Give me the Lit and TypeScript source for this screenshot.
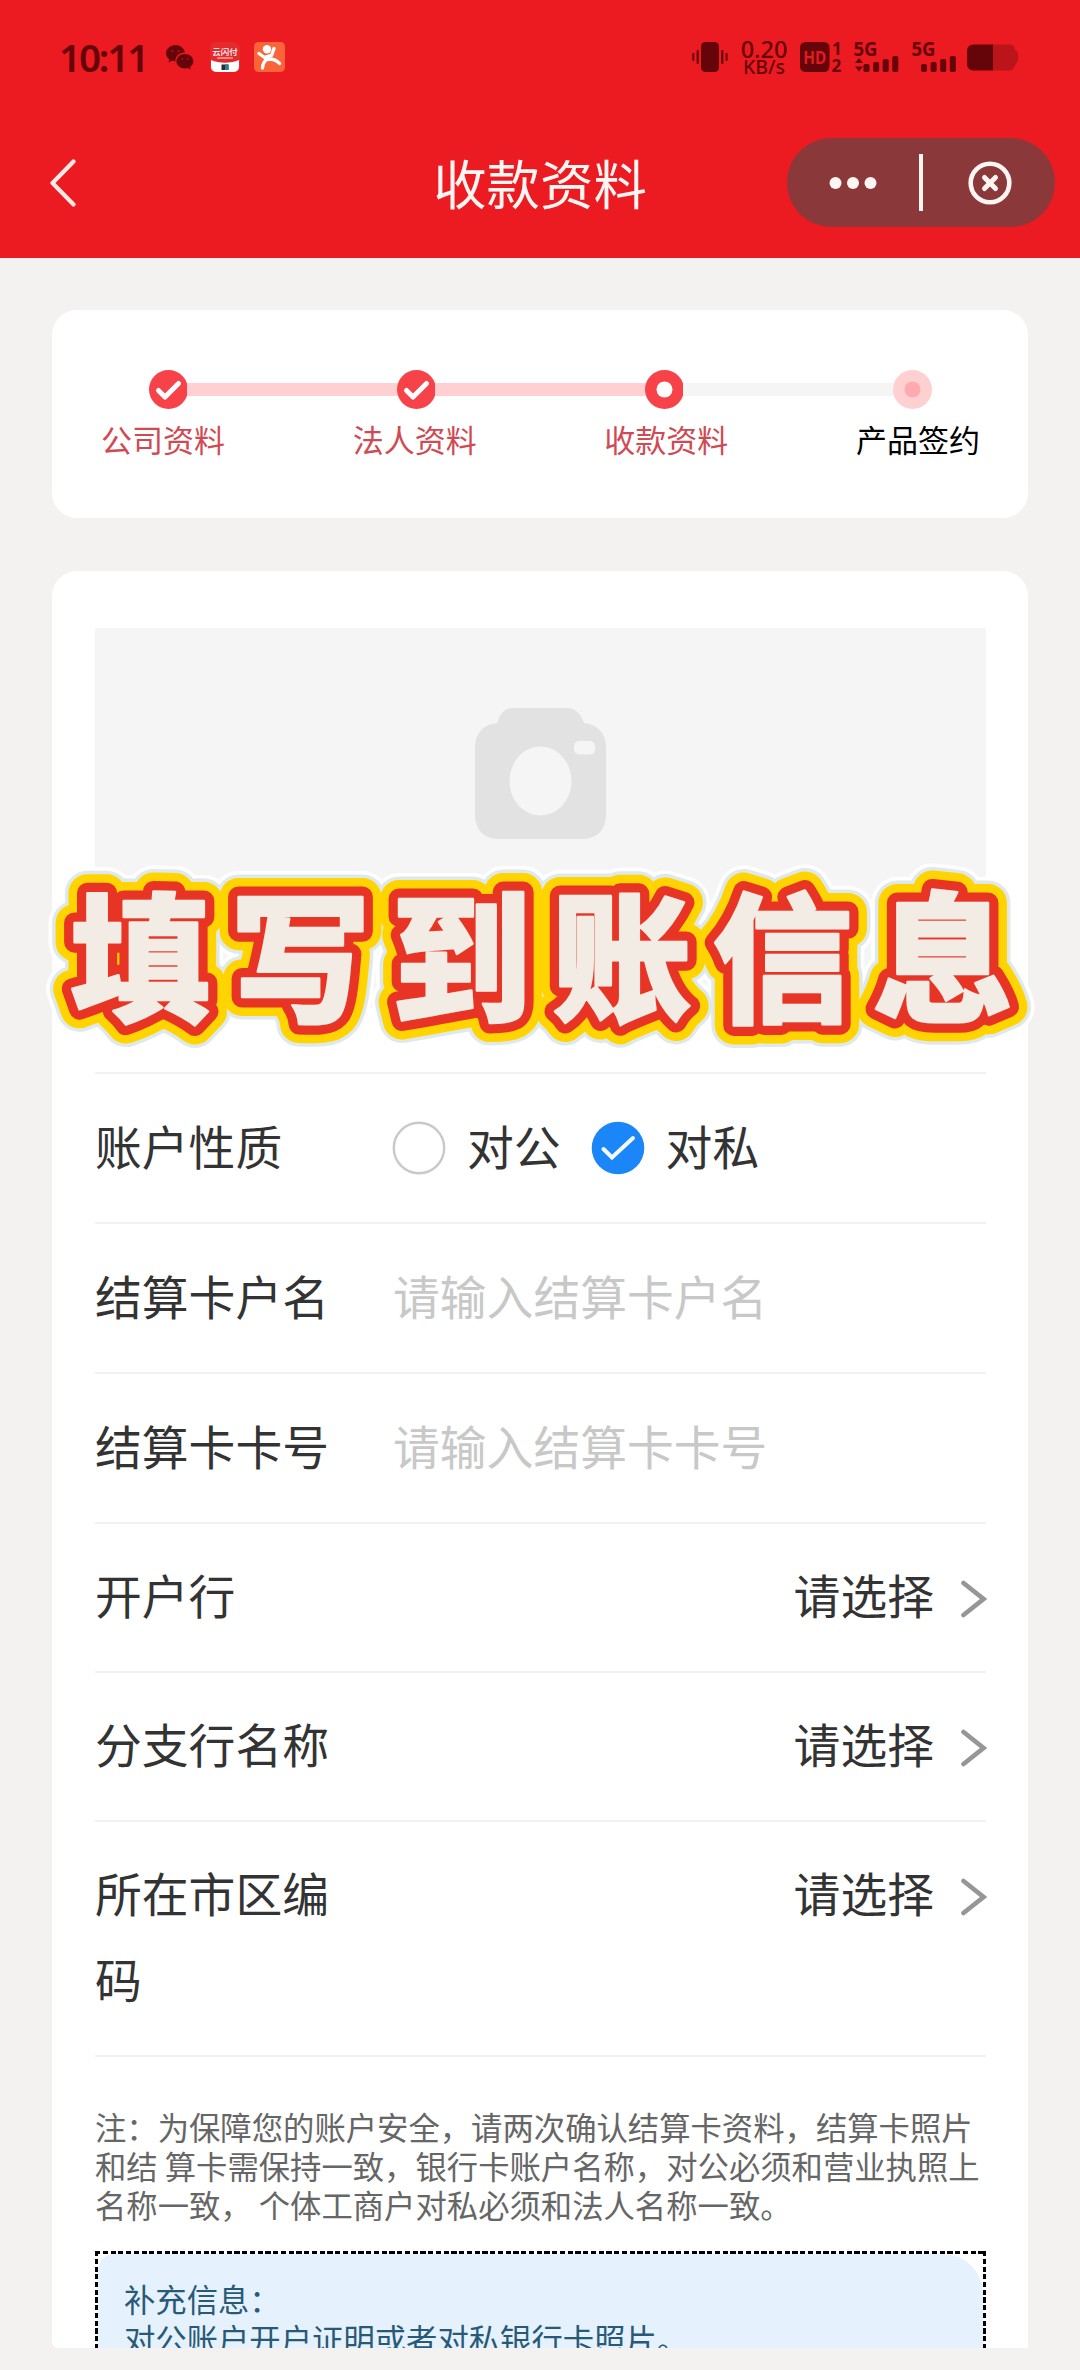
import { LitElement, html, css, svg } from "lit";
import { customElement, property } from "lit/decorators.js";

type StepState = "done" | "current" | "todo";

const STEPS: { label: string; state: StepState }[] = [
  { label: "公司资料", state: "done" },
  { label: "法人资料", state: "done" },
  { label: "收款资料", state: "current" },
  { label: "产品签约", state: "todo" },
];

const signalBars = (x: number) => svg`
  <rect x=${x} y="23" width="6" height="8" rx="1.8"/>
  <rect x=${x + 9.6} y="21" width="6" height="10" rx="1.8"/>
  <rect x=${x + 19.2} y="18" width="6" height="13" rx="1.8"/>
  <rect x=${x + 28.8} y="15" width="6" height="16" rx="1.8"/>`;

@customElement("status-bar")
export class StatusBar extends LitElement {
  static styles = css`
    :host {
      display: flex;
      align-items: center;
      height: 114px;
      padding: 0 61px 0 59px;
      color: #650509;
      font-family: "Noto Sans", "Noto Sans CJK SC", sans-serif;
    }
    svg { display: block; flex: none; overflow: visible; }
    .time {
      width: 107px;
      font-size: 38.5px;
      font-weight: 600;
      line-height: 54px;
      letter-spacing: -2.1px;
      white-space: nowrap;
    }
    .chat { margin-right: 16px; }
    .pay { margin-right: 14px; }
    .right { display: flex; align-items: center; margin-left: auto; }
    .speed {
      display: flex;
      flex-direction: column;
      align-items: center;
      width: 50px;
      margin: 2px 11px 0 11px;
      font-weight: 500;
    }
    .rate { font-size: 23.5px; line-height: 18px; }
    .unit { font-size: 19.5px; line-height: 18px; }
    .hd { margin-right: 11px; }
    .sim1 { margin-right: 13px; }
    .sim2 { margin-right: 10px; }
    .glyph { font-family: "Noto Sans", sans-serif; font-weight: 700; }
    .brand { font-family: "Noto Sans CJK SC", sans-serif; font-weight: 500; }
  `;
  render() {
    return html`
      <div class="time">10:11</div>
      <svg class="chat" width="28" height="26" viewBox="0 0 28 26">
        <path fill="#650509" d="M9.5 1C4.2 1 0 4.7 0 9.300c0 2.600 1.300 4.800 3.400 6.300L2.600 18.500l3.300-1.700c1.100.3 2.300.5 3.600.5A9 7.800 0 0 1 18.900 8.500C18.100 4.200 14.200 1 9.500 1z"/>
        <path fill="#650509" d="M19 10c-4.800 0-8.600 3.200-8.600 7.200s3.800 7.200 8.600 7.200c1 0 2-.2 2.900-.4l2.800 1.500-.7-2.500c2-1.300 3.400-3.400 3.400-5.800 0-4-3.700-7.200-8.400-7.200z"/>
        <g fill="#ec1b21" opacity=".45"><circle cx="6.300" cy="7" r="1.200"/><circle cx="12.600" cy="7" r="1.200"/><circle cx="16.200" cy="15" r="1"/><circle cx="21.700" cy="15" r="1"/></g>
      </svg>
      <svg class="pay" width="30" height="30" viewBox="0 0 30 30">
        <rect width="30" height="30" rx="6" fill="#e42a2d"/>
        <path d="M1 18c8 3.500 20 3.500 28 0v7a5 5 0 0 1-5 5H6a5 5 0 0 1-5-5z" fill="#fff"/>
        <rect x="11.500" y="22.500" width="7" height="5.500" fill="#23303a"/>
        <rect x="15" y="22.500" width="3.500" height="5.500" fill="#2f7f86"/>
        <text class="brand" x="15" y="12.500" font-size="8.500" fill="#fff" text-anchor="middle">云闪付</text>
        <rect x="7" y="15.200" width="16" height="1.600" fill="#fff" opacity=".55"/>
      </svg>
      <svg width="31" height="30" viewBox="0 0 31 30">
        <rect width="31" height="30" rx="4.500" fill="#fb6339"/>
        <g fill="none" stroke="#fff" stroke-width="3.400" stroke-linecap="round" stroke-linejoin="round">
          <path d="M5 11.500 10.500 15.500 17.500 13.500 20 6.500"/>
          <path d="M14 15.500C10.500 19 8.500 22 8.500 26"/>
          <path d="M14 17.500C18.500 16.500 22.500 18 25.500 21.500"/>
        </g>
        <circle cx="13" cy="7.200" r="4.200" fill="#fff"/>
      </svg>
      <div class="right">
        <svg width="36" height="30" viewBox="0 0 36 30" fill="#650509">
          <rect x="9" y="0" width="18" height="30" rx="4.500"/>
          <rect x="4.600" y="8" width="2.200" height="14" rx="1"/><rect x="29.200" y="8" width="2.200" height="14" rx="1"/>
          <rect x="0.300" y="11" width="2" height="8" rx="1"/><rect x="33.600" y="11" width="2" height="8" rx="1"/>
        </svg>
        <div class="speed"><span class="rate">0.20</span><span class="unit">KB/s</span></div>
        <svg class="hd" width="43" height="32" viewBox="0 0 43 32" fill="#650509">
          <rect x="0" y="1" width="29.500" height="30" rx="5.500"/>
          <text class="glyph" x="14.700" y="22.500" font-size="18" text-anchor="middle" fill="#e21c22" textLength="23" lengthAdjust="spacingAndGlyphs">HD</text>
          <text class="glyph" x="32" y="13.500" font-size="17">1</text>
          <text class="glyph" x="31.500" y="31" font-size="17">2</text>
        </svg>
        <svg class="sim1" width="45" height="32" viewBox="0 0 45 32" fill="#650509">
          <text class="glyph" x="-0.500" y="14.500" font-size="19.500" textLength="24" lengthAdjust="spacingAndGlyphs">5G</text>
          <path d="M5 17l4 5H1zM1 25.500h8l-4 5z"/>
          ${signalBars(9.5)}
        </svg>
        <svg class="sim2" width="45" height="32" viewBox="0 0 45 32" fill="#650509">
          <text class="glyph" x="-0.500" y="14.500" font-size="19.500" textLength="24" lengthAdjust="spacingAndGlyphs">5G</text>
          ${signalBars(9)}
        </svg>
        <svg width="52" height="28" viewBox="0 0 52 28">
          <path d="M25 1.500h17a6 6 0 0 1 6 5q3.500 2.500 3.500 7.500t-3.500 8a6 6 0 0 1-6 5.500H25z" fill="#bb151b"/>
          <path d="M6 1.500h20v26H6a6 6 0 0 1-6-6v-14a6 6 0 0 1 6-6z" fill="#650509"/>
        </svg>
      </div>`;
  }
}

@customElement("nav-bar")
export class NavBar extends LitElement {
  static styles = css`
    :host {
      display: grid;
      grid-template-columns: 1fr 214px 1fr;
      align-items: center;
      height: 143.5px;
      color: #fff5f3;
    }
    svg { display: block; }
    .back { margin: -6px 0 0 49px; }
    .title {
      padding-bottom: 7px;
      font-size: 53.4px;
      line-height: 60px;
      white-space: nowrap;
      text-align: center;
    }
    .capsule {
      justify-self: end;
      display: flex;
      align-items: center;
      box-sizing: border-box;
      width: 268px;
      height: 89px;
      margin: -6px 25px 0 0;
      padding-left: 42px;
      border-radius: 45px;
      background: #8b383b;
    }
    .divider { width: 4px; height: 57px; margin: 0 45px 0 42px; background: #fff5f3; }
  `;
  render() {
    return html`
      <svg class="back" width="28" height="48" viewBox="0 0 28 48">
        <path d="M24.500 2.500 3.500 24l21 21.500" fill="none" stroke="#ffe9e6" stroke-width="4.200" stroke-linecap="round" stroke-linejoin="round"/>
      </svg>
      <div class="title">收款资料</div>
      <div class="capsule">
        <svg width="48" height="14" viewBox="0 0 48 14" fill="#fff5f3">
          <circle cx="6.500" cy="7" r="6"/><circle cx="24" cy="7" r="6"/><circle cx="41.500" cy="7" r="6"/>
        </svg>
        <div class="divider"></div>
        <svg width="44" height="44" viewBox="0 0 44 44" fill="none" stroke="#fff5f3" stroke-linecap="round">
          <circle cx="22" cy="22" r="19.300" stroke-width="4.600"/>
          <path d="M16.500 16.500l11 11M27.500 16.500l-11 11" stroke-width="5"/>
        </svg>
      </div>`;
  }
}

@customElement("step-progress")
export class StepProgress extends LitElement {
  static styles = css`
    :host {
      display: block;
      box-sizing: border-box;
      height: 208px;
      padding: 59.5px 48px 0 49px;
      border-radius: 25px;
      background: #fff;
    }
    svg { display: block; flex: none; }
    .track { display: flex; align-items: center; padding: 0 48px; }
    .bar { flex: 1; height: 13px; margin: 0 -1px; background: #fed0d2; }
    .bar.pending { background: #f5f5f5; }
    .labels { display: flex; justify-content: space-between; margin-top: 9.5px; }
    .label {
      color: #d04a53;
      font-size: 31px;
      line-height: 42px;
      white-space: nowrap;
    }
    .label.todo { color: #000; }
  `;
  private dot(state: StepState) {
    const inner =
      state === "done"
        ? svg`<circle cx="19.500" cy="19.500" r="19.500" fill="#f8424a"/><path d="M9.500 20.500 16 27 29.500 13.500" fill="none" stroke="#fff" stroke-width="5" stroke-linecap="round" stroke-linejoin="round"/>`
        : state === "current"
          ? svg`<circle cx="19.500" cy="19.500" r="19.500" fill="#f8424a"/><circle cx="19.500" cy="19.500" r="8" fill="#fff"/>`
          : svg`<circle cx="19.500" cy="19.500" r="19.500" fill="#fed0d2"/><circle cx="19.500" cy="19.500" r="8" fill="#ffaab0"/>`;
    return html`<svg width="39" height="39" viewBox="0 0 39 39">${inner}</svg>`;
  }
  render() {
    return html`
      <div class="track">
        ${STEPS.map((s, i) => html`
          ${i ? html`<div class="bar ${s.state === "todo" ? "pending" : ""}"></div>` : null}
          ${this.dot(s.state)}`)}
      </div>
      <div class="labels">
        ${STEPS.map((s) => html`<div class="label ${s.state}">${s.label}</div>`)}
      </div>`;
  }
}

@customElement("form-row")
export class FormRow extends LitElement {
  @property() label = "";
  @property({ reflect: true }) kind = "input";
  @property() hint = "";
  static styles = css`
    :host {
      display: flex;
      box-sizing: border-box;
      padding: 28px 0 34px;
      border-bottom: 2px solid #f1f1f1;
      color: #333;
      font-size: 46.8px;
      line-height: 86px;
    }
    :host([kind="select"]) { padding: 27.5px 0 33.5px; }
    svg { display: block; flex: none; }
    .label { width: 250px; margin-right: 48px; }
    .hint { color: #c8c8c8; white-space: nowrap; }
    .options { display: flex; align-items: center; height: 86px; }
    .options svg { margin: 6px 0 0 -1px; }
    .text { margin: 0 31px 0 21px; white-space: nowrap; }
    .pick { display: flex; align-items: center; height: 86px; margin-left: auto; }
    .arrow { margin: 9px -1px 0 24px; }
  `;
  private field() {
    if (this.kind === "radio") {
      return html`<div class="options">
        <svg width="54" height="54" viewBox="0 0 54 54"><circle cx="27" cy="27" r="25.200" fill="#fff" stroke="#c8c9cc" stroke-width="2.400"/></svg>
        <span class="text">对公</span>
        <svg width="54" height="54" viewBox="0 0 54 54">
          <circle cx="27" cy="27" r="26.300" fill="#1b86f8"/>
          <path d="M12.500 28 21 36.500 42 17" fill="none" stroke="#f2fbff" stroke-width="4" stroke-linecap="round" stroke-linejoin="miter"/>
        </svg>
        <span class="text">对私</span>
      </div>`;
    }
    if (this.kind === "select") {
      return html`<div class="pick"><span>${this.hint}</span>
        <svg class="arrow" width="29" height="40" viewBox="0 0 29 40"><path d="M5.500 4 25.500 20 5.500 36" fill="none" stroke="#969696" stroke-width="4.600" stroke-linecap="round"/></svg>
      </div>`;
    }
    return html`<div class="hint">${this.hint}</div>`;
  }
  render() {
    return html`<div class="label">${this.label}</div>${this.field()}`;
  }
}

@customElement("caption-banner")
export class CaptionBanner extends LitElement {
  static styles = css`
    :host { display: block; }
    svg { display: block; overflow: visible; }
    .word {
      font-family: "Noto Sans CJK SC", sans-serif;
      font-weight: 900;
      font-size: 140px;
    }
    .layer { stroke-linejoin: round; }
  `;
  render() {
    return html`<svg width="990" height="190" viewBox="0 0 990 190">
      <defs><text id="word" class="word" x="24" y="145" textLength="943" lengthAdjust="spacing">填写到账信息</text></defs>
      <g class="layer">
        <use href="#word" fill="#fff" stroke="#fff" stroke-width="52"/>
        <use href="#word" fill="#dfe9ec" stroke="#dfe9ec" stroke-width="45"/>
        <use href="#word" fill="#ffd400" stroke="#ffd400" stroke-width="38"/>
        <use href="#word" fill="#e83425" stroke="#e83425" stroke-width="21"/>
        <use href="#word" fill="#f3ece4" stroke="#f3ece4" stroke-width="2.500"/>
      </g>
    </svg>`;
  }
}

@customElement("app-root")
export class AppRoot extends LitElement {
  static styles = css`
    :host {
      display: block;
      height: 2370px;
      overflow: hidden;
      background: #f3f2f0;
      font-family: "Noto Sans CJK SC", sans-serif;
    }
    .header { background: #ec1a21; }
    .content { padding: 52.5px 52px 0; }
    .card {
      box-sizing: border-box;
      height: 1777px;
      margin-top: 52.5px;
      padding: 57px 42px 0 43px;
      overflow: hidden;
      border-radius: 25px 25px 0 6px;
      background: #fff;
    }
    .wrap { position: relative; }
    .upload {
      display: flex;
      justify-content: center;
      box-sizing: border-box;
      height: 380px;
      padding-top: 80px;
      background: #f5f5f5;
    }
    .rows { margin-top: 64px; border-top: 2px solid #f1f1f1; }
    .banner { position: absolute; left: -6px; top: 295px; }
    .note {
      margin: 50px 0 0;
      color: #666;
      font-size: 31.35px;
      line-height: 39.2px;
      white-space: pre;
    }
    .extra {
      box-sizing: border-box;
      height: 140px;
      margin-top: 26.5px;
      padding: 3px;
      background:
        repeating-linear-gradient(90deg, #000 0 5.2px, transparent 5.2px 7.75px) 0 0 / 100% 3px no-repeat,
        repeating-linear-gradient(180deg, #000 0 5.2px, transparent 5.2px 7.75px) 0 0 / 3px 100% no-repeat,
        repeating-linear-gradient(180deg, #000 0 5.2px, transparent 5.2px 7.75px) 100% 0 / 3px 100% no-repeat;
    }
    .panel {
      box-sizing: border-box;
      height: 137px;
      padding: 25px 26px 0;
      border-radius: 16px 40px 0 0;
      background: #e5f2fd;
      color: #285a78;
      font-size: 31.35px;
      line-height: 40px;
      white-space: nowrap;
    }
  `;
  render() {
    return html`
      <div class="header"><status-bar></status-bar><nav-bar></nav-bar></div>
      <div class="content">
        <step-progress></step-progress>
        <div class="wrap">
          <div class="card">
            <div class="upload">
              <svg width="131" height="131" viewBox="0 0 131 131">
                <path fill="#e2e2e2" fill-rule="evenodd" d="M36 0H93Q104 1 109 15Q130 18 131 38V108Q130 129 109 131H22Q1 129 0 108V38Q1 18 22 15Q26 1 36 0zM65.500 38.500c-17 0-31 15.400-31 34.500s14 34.500 31 34.500 31-15.400 31-34.500-14-34.500-31-34.500zM104 33a5 5 0 0 0-5 5v3.500a5 5 0 0 0 5 5h11a5 5 0 0 0 5-5V38a5 5 0 0 0-5-5z"/>
              </svg>
            </div>
            <div class="rows">
              <form-row label="账户性质" kind="radio"></form-row>
              <form-row label="结算卡户名" hint="请输入结算卡户名"></form-row>
              <form-row label="结算卡卡号" hint="请输入结算卡卡号"></form-row>
              <form-row label="开户行" kind="select" hint="请选择"></form-row>
              <form-row label="分支行名称" kind="select" hint="请选择"></form-row>
              <form-row label="所在市区编码" kind="select" hint="请选择"></form-row>
            </div>
            <p class="note">注：为保障您的账户安全，请两次确认结算卡资料，结算卡照片<br>和结 算卡需保持一致，银行卡账户名称，对公必须和营业执照上<br>名称一致， 个体工商户对私必须和法人名称一致。</p>
            <div class="extra">
              <div class="panel">补充信息：<br>对公账户开户证明或者对私银行卡照片。</div>
            </div>
          </div>
          <caption-banner class="banner"></caption-banner>
        </div>
      </div>`;
  }
}
